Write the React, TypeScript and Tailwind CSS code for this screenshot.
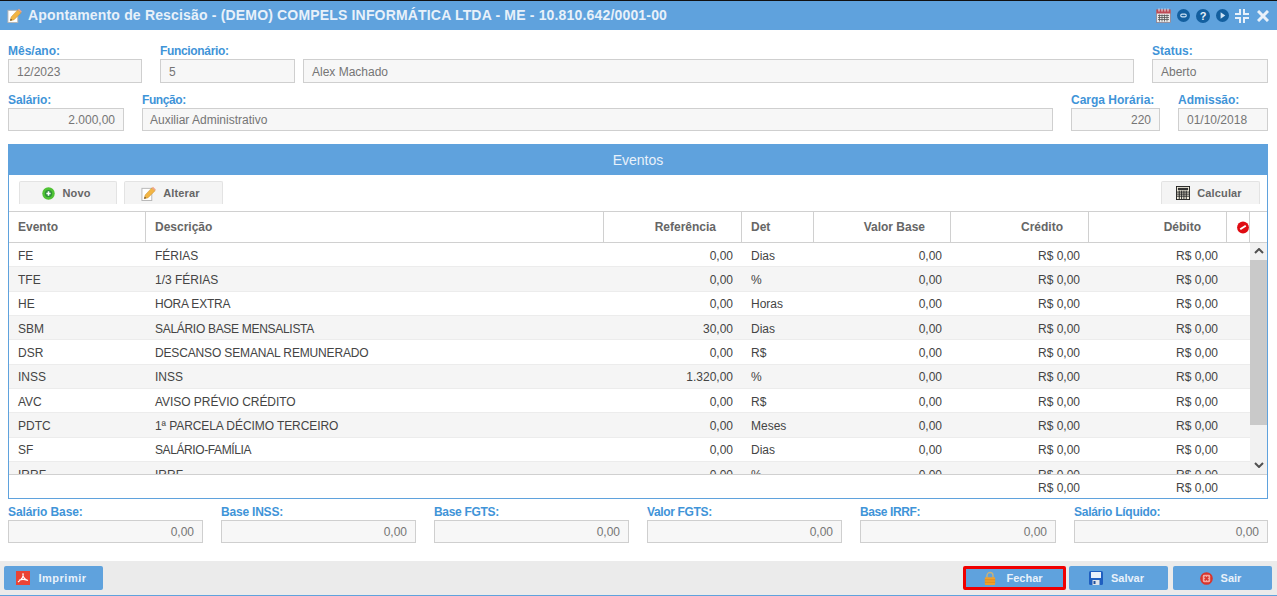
import React from "react";

const Field = ({ label, value, w, right, grow, short, lt, ind }: { label?: string; value: string; w?: string; right?: boolean; grow?: boolean; short?: boolean; lt?: string; ind?: string }) => (
  <div className={`${w ?? ""} ${grow ? "flex-1 min-w-0" : "shrink-0"} flex flex-col`}>
    <div className={`h-[15px] text-[12px] leading-[15px] font-bold text-[#3f94d8] whitespace-nowrap ${lt ?? ""}`}>{label ?? "\u00a0"}</div>
    <div className={`${short ? "h-[23px] leading-[23px]" : "h-[24px] leading-[24px]"} border border-[#cfcfcf] bg-[#f7f7f7] text-[12px] text-[#757575] ${ind ?? "px-2"} whitespace-nowrap ${right ? "text-right" : ""}`}>{value}</div>
  </div>
);

const PencilIcon = ({ s = 16 }: { s?: number }) => (
  <svg width={s} height={s} viewBox="0 0 16 16">
    <rect x="1" y="2.500" width="10.500" height="13" fill="#fff" stroke="#b5b5b5" />
    <path d="M3.500 13.500l1-4L11.500 2l3.500 3-7.500 7.500z" fill="#f2b544" stroke="#cf922a" strokeWidth="0.6" />
    <path d="M11.500 2l1.300-1.300 3 3L15 5z" fill="#f0a58a" />
    <path d="M3.500 13.500l.5-2 1.500 1.300z" fill="#4a3a2a" />
  </svg>
);

const PlusIcon = () => (
  <svg width="13" height="13" viewBox="0 0 14 14">
    <circle cx="7" cy="7" r="6.700" fill="#4fc234" />
    <circle cx="7" cy="7" r="3.900" fill="#2f8f3a" />
    <path d="M7 4.700v4.600M4.700 7h4.600" stroke="#fff" strokeWidth="1.700" />
  </svg>
);

const CalcIcon = () => (
  <svg width="14" height="14" viewBox="0 0 15 15">
    <rect x="0.500" y="0.500" width="14" height="14" fill="#f5f0e0" stroke="#222" />
    <rect x="2" y="2" width="11" height="2.500" fill="#333" />
    <path d="M1 6.500h13M1 8.700h13M1 10.900h13M3.500 5v9M6 5v9M8.500 5v9M11 5v9" stroke="#222" strokeWidth="1" />
  </svg>
);

const NoIcon = () => (
  <svg width="13" height="13" viewBox="0 0 13 13">
    <circle cx="6.500" cy="6.500" r="6.400" fill="#df0b12" />
    <path d="M3.500 8.500l6-4" stroke="#fff" strokeWidth="2" />
  </svg>
);

const PdfIcon = () => (
  <svg width="14" height="14" viewBox="0 0 14 14">
    <rect width="14" height="14" fill="#ea4335" />
    <path d="M7 2.500c-.8 2.500 1.500 6 5 7M7 2.500c.8 2.500-1.500 6-5 8.500M3 9.200c2.500-1 5.500-1 8 0" fill="none" stroke="#fff" strokeWidth="1.200" />
  </svg>
);

const LockIcon = () => (
  <svg width="12" height="15" viewBox="0 0 14 16">
    <path d="M3.500 7V4.500a3.500 3.500 0 017 0V7" fill="none" stroke="#c7b27a" strokeWidth="1.600" />
    <rect x="1" y="6.500" width="12" height="9" rx="1" fill="#f0a02e" />
    <path d="M1 9.500h12M1 12.500h12" stroke="#d98a20" />
  </svg>
);

const SaveIcon = () => (
  <svg width="14" height="14" viewBox="0 0 14 14">
    <rect width="14" height="14" rx="1.500" fill="#1f5fc0" />
    <rect x="2" y="1" width="10" height="6" fill="#e9f1fb" />
    <rect x="3.500" y="9" width="7" height="5" fill="#dfe4ea" />
    <rect x="4.500" y="10" width="2" height="3" fill="#1f4f9c" />
  </svg>
);

const ExitIcon = () => (
  <svg width="13" height="13" viewBox="0 0 14 14">
    <circle cx="7" cy="7" r="6.800" fill="#d9352c" />
    <rect x="3" y="3" width="8" height="8" rx="1.500" fill="#f5a8a2" />
    <path d="M5 5l4 4M9 5l-4 4" stroke="#d9352c" strokeWidth="1.800" />
  </svg>
);

const CalendarIcon = () => (
  <svg width="15" height="15" viewBox="0 0 15 15">
    <rect x="0.500" y="2" width="14" height="12.500" fill="#e8e8e8" stroke="#8a6a70" strokeWidth="0.600" />
    <rect x="0.500" y="1.500" width="14" height="4" fill="#bd4a55" />
    <path d="M3 0.500v3M6 0.500v3M9 0.500v3M12 0.500v3" stroke="#eee" />
    <path d="M2 7.500h11M2 9.500h11M2 11.500h11M3.500 6.500v7M6 6.500v7M8.500 6.500v7M11 6.500v7" stroke="#555" strokeWidth="0.800" />
  </svg>
);

const RoundIcon = ({ children, s }: { children: React.ReactNode; s: number }) => (
  <svg width={s} height={s} viewBox="0 0 14 14">
    <circle cx="7" cy="7" r="7" fill="#135f9f" />
    {children}
  </svg>
);

const rows = [
  ["FE", "FÉRIAS", "0,00", "Dias", ""],
  ["TFE", "1/3 FÉRIAS", "0,00", "%", ""],
  ["HE", "HORA EXTRA", "0,00", "Horas", "tracking-[-0.2px]"],
  ["SBM", "SALÁRIO BASE MENSALISTA", "30,00", "Dias", "tracking-[-0.3px]"],
  ["DSR", "DESCANSO SEMANAL REMUNERADO", "0,00", "R$", "tracking-[-0.15px]"],
  ["INSS", "INSS", "1.320,00", "%", ""],
  ["AVC", "AVISO PRÉVIO CRÉDITO", "0,00", "R$", "tracking-[-0.05px]"],
  ["PDTC", "1ª PARCELA DÉCIMO TERCEIRO", "0,00", "Meses", "tracking-[-0.08px]"],
  ["SF", "SALÁRIO-FAMÍLIA", "0,00", "Dias", "tracking-[-0.4px]"],
  ["IRRF", "IRRF", "0,00", "%", ""],
];

const cols = "grid grid-cols-[137px_458px_138px_72px_137px_138px_138px]";

const ToolBtn = ({ icon, label, w, pr }: { icon: React.ReactNode; label: string; w: string; pr: string }) => (
  <div className={`${w} ${pr} h-[23px] bg-[#f4f4f4] border border-b-0 border-[#e3e3e3] rounded-t-[2px] flex items-center justify-center gap-[7px] text-[11px] font-bold tracking-[0.15px] text-[#666]`}>
    {icon}
    <span>{label}</span>
  </div>
);

const FootBtn = ({ icon, label, w, red, lt }: { icon: React.ReactNode; label: string; w: string; red?: boolean; lt?: string }) => (
  <div className={`${w} ${red ? "border-[3px] border-[#f00000] pr-[2px] gap-[10px]" : "pr-[4px] gap-[8px]"} rounded-[2px] h-[24px] bg-[#5fa2dd] flex items-center justify-center text-[11px] font-bold text-[#e8f1fa] ${lt ?? ""}`}>
    {icon}
    <span>{label}</span>
  </div>
);

const Head = ({ children, right }: { children?: React.ReactNode; right?: boolean }) => (
  <div className={`h-full border-r border-[#d0d0d0] flex items-center text-[12px] font-bold text-[#666] ${right ? "justify-end pr-[25px]" : "pl-[9px]"}`}>{children}</div>
);

export default function App() {
  return (
    <div className="w-[1277px] h-[596px] overflow-hidden bg-white flex flex-col font-['Liberation_Sans',Arial,sans-serif] border-t border-[#111]">
      <header className="h-[29px] shrink-0 bg-[#5fa2dd] flex items-center pl-[7px] pr-[8px]">
        <PencilIcon s={15} />
        <span className="ml-[6px] text-[14px] font-bold tracking-[0.17px] text-[#e8f1fa] whitespace-nowrap">Apontamento de Rescisão - (DEMO) COMPELS INFORMÁTICA LTDA - ME - 10.810.642/0001-00</span>
        <div className="ml-auto flex items-center gap-[6px]">
          <CalendarIcon />
          <RoundIcon s={13}><rect x="4" y="5.500" width="6" height="3" rx="1.500" fill="none" stroke="#cfe3f5" strokeWidth="1.200" /></RoundIcon>
          <RoundIcon s={14}><text x="7" y="11" textAnchor="middle" fontSize="11" fontWeight="bold" fill="#e8f1fa" fontFamily="Liberation Sans">?</text></RoundIcon>
          <RoundIcon s={13}><path d="M5 3.500l5 3.500-5 3.500z" fill="#cfe3f5" /></RoundIcon>
          <svg width="14" height="14" viewBox="0 0 14 14" fill="none" stroke="#e8f1fa" strokeWidth="2">
            <path d="M5 0v5H0M9 0v5h5M5 14V9H0M9 14V9h5" />
          </svg>
          <svg width="12" height="12" viewBox="0 0 12 12" className="ml-[2px]" stroke="#e8f1fa" strokeWidth="3">
            <path d="M1 1l10 10M11 1L1 11" />
          </svg>
        </div>
      </header>

      <main className="flex-1 pl-2 pr-[9px] pt-[14px] min-h-0 flex flex-col">
        <div className="flex gap-[18px]">
          <Field label="Mês/ano:" value="12/2023" w="w-[134px]" />
          <div className="flex-1 flex gap-2 min-w-0">
            <Field label="Funcionário:" value="5" w="w-[135px]" lt="tracking-[-0.33px]" />
            <Field value="Alex Machado" grow />
          </div>
          <Field label="Status:" value="Aberto" w="w-[116px]" />
        </div>
        <div className="flex gap-[18px] mt-[10px]">
          <Field label="Salário:" value="2.000,00" w="w-[116px]" right short lt="tracking-[-0.1px]" />
          <Field label="Função:" value="Auxiliar Administrativo" grow short lt="tracking-[-0.4px]" ind="px-[7px]" />
          <Field label="Carga Horária:" value="220" w="w-[89px]" right short />
          <Field label="Admissão:" value="01/10/2018" w="w-[90px]" short />
        </div>

        <section className="mt-[13px] h-[355px] shrink-0 border border-[#5fa2dd] border-t-0 flex flex-col">
          <div className="h-[31px] shrink-0 -mx-px pt-[1px] bg-[#5fa2dd] text-[14px] text-[#e8f1fa] flex items-center justify-center">Eventos</div>
          <div className="h-[37px] shrink-0 pl-[10px] pr-[7px] pt-[6px] flex items-start border-b border-[#d0d0d0]">
            <ToolBtn w="w-[98px]" pr="pr-[3px]" label="Novo" icon={<PlusIcon />} />
            <div className="w-[7px]" />
            <ToolBtn w="w-[99px]" pr="pr-[6px]" label="Alterar" icon={<PencilIcon s={15} />} />
            <div className="ml-auto">
              <ToolBtn w="w-[99px]" pr="pr-[3px]" label="Calcular" icon={<CalcIcon />} />
            </div>
          </div>
          <div className="h-[31px] shrink-0 flex border-b border-[#d0d0d0]">
            <div className={`${cols} h-full`}>
              <Head>Evento</Head>
              <Head>Descrição</Head>
              <Head right>Referência</Head>
              <Head>Det</Head>
              <Head right>Valor Base</Head>
              <Head right>Crédito</Head>
              <Head right>Débito</Head>
            </div>
            <div className="w-[23px] h-full border-r border-[#d0d0d0] flex items-center justify-center pl-[10px] pt-[1px]"><NoIcon /></div>
          </div>
          <div className="h-[231px] shrink-0 flex">
            <div className="w-[1241px] shrink-0 overflow-hidden">
              {rows.map((r, i) => (
                <div key={r[0]} className={`${cols} h-[24.33px] pt-[2px] border-b border-[#ececec] items-center text-[12px] text-[#444] ${i % 2 ? "bg-[#f5f5f5]" : "bg-white"}`}>
                  <div className="pl-[9px]">{r[0]}</div>
                  <div className={`pl-[9px] ${r[4]}`}>{r[1]}</div>
                  <div className="text-right pr-[9px]">{r[2]}</div>
                  <div className="pl-[9px]">{r[3]}</div>
                  <div className="text-right pr-[9px]">0,00</div>
                  <div className="text-right pr-[9px]">R$ 0,00</div>
                  <div className="text-right pr-[9px]">R$ 0,00</div>
                </div>
              ))}
            </div>
            <div className="flex-1 bg-[#f1f1f1] flex flex-col">
              <div className="h-[17px] shrink-0 pb-[2px] flex items-center justify-center">
                <svg width="10" height="6" viewBox="0 0 10 6" fill="none" stroke="#505050" strokeWidth="2"><path d="M1 5l4-4 4 4" /></svg>
              </div>
              <div className="h-[165px] shrink-0 bg-[#c9c9c9]" />
              <div className="flex-1 flex items-end justify-center pb-[6px]">
                <svg width="10" height="6" viewBox="0 0 10 6" fill="none" stroke="#505050" strokeWidth="2"><path d="M1 1l4 4 4-4" /></svg>
              </div>
            </div>
          </div>
          <div className="flex-1 border-t border-[#d0d0d0] pt-[2px] text-[12px] text-[#444] flex items-center">
            <div className={`${cols}`}>
              <div /><div /><div /><div /><div />
              <div className="text-right pr-[9px]">R$ 0,00</div>
              <div className="text-right pr-[9px]">R$ 0,00</div>
            </div>
          </div>
        </section>

        <div className="flex gap-[18px] mt-[6px]">
          <Field label="Salário Base:" value="0,00" w="w-[195px]" right short lt="tracking-[-0.1px]" />
          <Field label="Base INSS:" value="0,00" w="w-[195px]" right short lt="tracking-[-0.2px]" />
          <Field label="Base FGTS:" value="0,00" w="w-[195px]" right short lt="tracking-[-0.3px]" />
          <Field label="Valor FGTS:" value="0,00" w="w-[195px]" right short lt="tracking-[-0.35px]" />
          <Field label="Base IRRF:" value="0,00" w="w-[196px]" right short lt="tracking-[-0.4px]" />
          <Field label="Salário Líquido:" value="0,00" w="w-[194px]" right short lt="tracking-[-0.27px]" />
        </div>
      </main>

      <footer className="h-[35px] shrink-0 bg-[#ebebeb] border-b border-[#5fa2dd] pl-1 pr-[5px] pt-[5px] flex items-start">
        <FootBtn w="w-[99px]" label="Imprimir" icon={<PdfIcon />} lt="tracking-[0.5px]" />
        <div className="ml-auto flex">
          <FootBtn w="w-[103px]" label="Fechar" icon={<LockIcon />} red />
          <div className="w-[3px]" />
          <FootBtn w="w-[99px]" label="Salvar" icon={<SaveIcon />} />
          <div className="w-[5px]" />
          <FootBtn w="w-[99px]" label="Sair" icon={<ExitIcon />} />
        </div>
      </footer>
    </div>
  );
}
